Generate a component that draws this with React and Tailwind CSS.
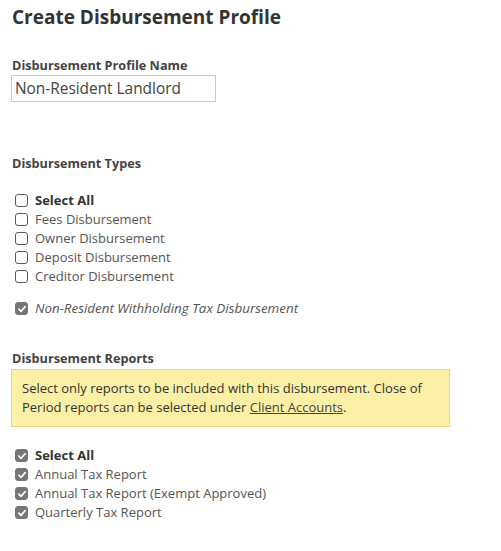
import React, { useState } from 'react';

const Box = ({ checked }) => (
  <span
    className={
      'inline-flex h-[13px] w-[13px] shrink-0 items-center justify-center rounded-[3px] border ' +
      (checked ? 'border-[#767676] bg-[#767676]' : 'border-[#5a5a5a] bg-white')
    }
  >
    {checked && (
      <svg viewBox="0 0 12 12" className="h-[10px] w-[10px]">
        <path d="M2.2 6.2 L4.8 8.8 L9.8 3.2" fill="none" stroke="white" strokeWidth="2" strokeLinecap="round" strokeLinejoin="round" />
      </svg>
    )}
  </span>
);

const CheckRow = ({ label, checked, bold, italic, onToggle }) => (
  <label className="flex h-[19px] cursor-pointer items-center gap-[7px] pl-[3px]" onClick={onToggle}>
    <Box checked={checked} />
    <span className={(bold ? 'font-bold text-[#333] ' : 'text-[#555] ') + (italic ? 'text-[13.4px] italic' : '')}>{label}</span>
  </label>
);

const types = ['Fees Disbursement', 'Owner Disbursement', 'Deposit Disbursement', 'Creditor Disbursement'];
const reports = ['Annual Tax Report', 'Annual Tax Report (Exempt Approved)', 'Quarterly Tax Report'];

export default function App() {
  const [name, setName] = useState('Non-Resident Landlord');
  const [typeSel, setTypeSel] = useState(types.map(() => false));
  const [repSel, setRepSel] = useState(reports.map(() => true));

  return (
    <div className="min-h-screen bg-white px-[12px] pt-[4px] text-[13px] text-[#555]" style={{ fontFamily: '"Open Sans", sans-serif' }}>
      <h1 className="text-[19px] font-bold leading-[26px] text-[#333]">Create Disbursement Profile</h1>

      <div className="mt-[27px] text-[12.7px] font-bold leading-[16px] text-[#444]">Disbursement Profile Name</div>
      <input
        className="-ml-px mt-[2px] h-[27px] w-[205px] border border-[#c8c8c8] px-[3px] text-[15.4px] text-[#444] outline-none"
        value={name}
        onChange={(e) => setName(e.target.value)}
      />

      <div className="mt-[53px] text-[12.7px] font-bold leading-[16px] text-[#444]">Disbursement Types</div>
      <div className="mt-[20px] flex flex-col">
        <CheckRow
          label="Select All"
          bold
          checked={typeSel.every(Boolean)}
          onToggle={(e) => {
            e.preventDefault();
            const v = !typeSel.every(Boolean);
            setTypeSel(types.map(() => v));
          }}
        />
        {types.map((t, i) => (
          <CheckRow
            key={t}
            label={t}
            checked={typeSel[i]}
            onToggle={(e) => {
              e.preventDefault();
              setTypeSel(typeSel.map((s, j) => (j === i ? !s : s)));
            }}
          />
        ))}
        <div className="mt-[13px]">
          <CheckRow label="Non-Resident Withholding Tax Disbursement" checked italic />
        </div>
      </div>

      <div className="mt-[32px] text-[12.7px] font-bold leading-[16px] text-[#444]">Disbursement Reports</div>
      <div className="-ml-px mt-[3px] w-[439px] border border-[#efd67a] bg-[#fcf0a6] px-[10px] py-[9px] text-[13px] leading-[19px] text-[#333]">
        Select only reports to be included with this disbursement. Close of
        <br />
        Period reports can be selected under{' '}
        <a href="#" className="text-[#444] underline">Client Accounts</a>.
      </div>

      <div className="mt-[19px] flex flex-col">
        <CheckRow
          label="Select All"
          bold
          checked={repSel.every(Boolean)}
          onToggle={(e) => {
            e.preventDefault();
            const v = !repSel.every(Boolean);
            setRepSel(reports.map(() => v));
          }}
        />
        {reports.map((r, i) => (
          <CheckRow
            key={r}
            label={r}
            checked={repSel[i]}
            onToggle={(e) => {
              e.preventDefault();
              setRepSel(repSel.map((s, j) => (j === i ? !s : s)));
            }}
          />
        ))}
      </div>
    </div>
  );
}
